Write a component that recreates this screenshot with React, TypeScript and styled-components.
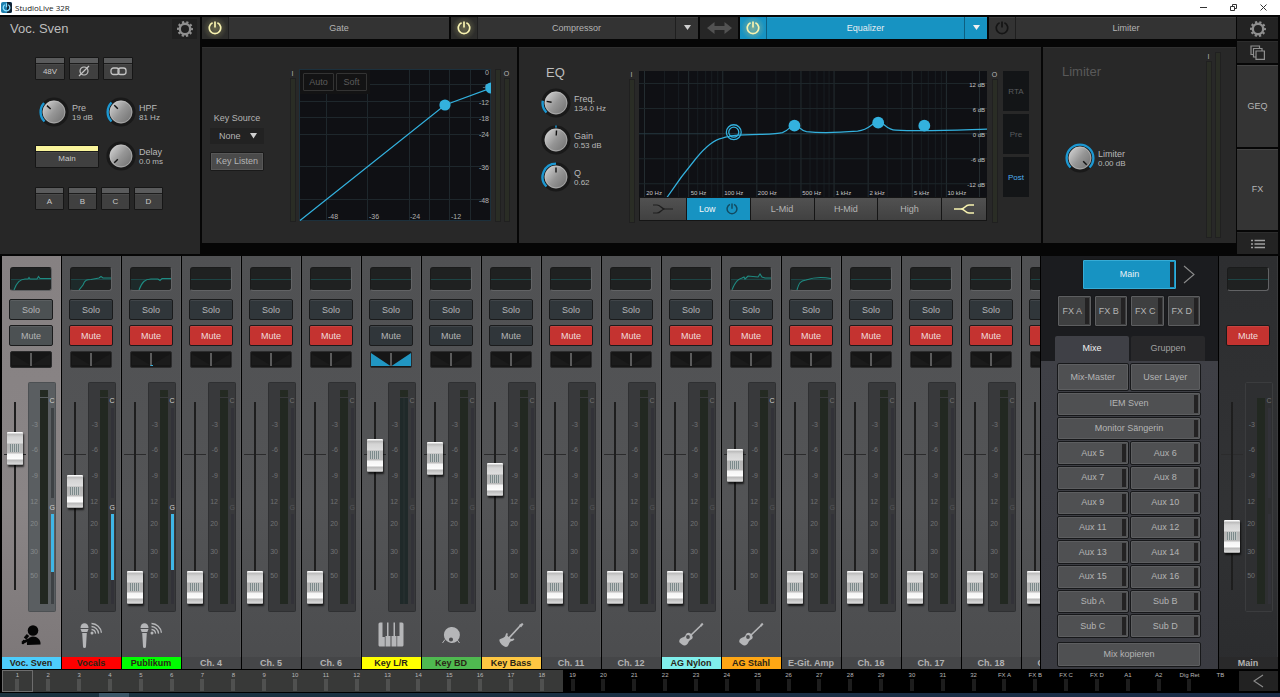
import React, { useId, useState } from 'react';
import styled, { createGlobalStyle, css } from 'styled-components';

const blue = '#1793c2';
const accent = '#33b1de';
const cream = '#f8f3b0';

const GlobalStyle = createGlobalStyle`
  *, *::before, *::after { box-sizing: border-box; }
  body {
    margin: 0;
    background: #000;
    color: #b4b4b4;
    font: 9px/11px "Liberation Sans", Arial, sans-serif;
  }
  button, input, select {
    margin: 0;
    padding: 0;
    border: 0;
    background: none;
    color: inherit;
    font: inherit;
  }
  svg { display: block; }
`;

const Page = styled.div`
  display: flex;
  flex-direction: column;
  min-height: 100vh;
`;

/* ---------- window title bar ---------- */

const TitleBar = styled.header`
  display: flex;
  align-items: center;
  height: 15px;
  padding: 0 2px 0 1px;
  background: #fff;
  color: #222;
  font: 8px/12px "Open Sans", "Noto Sans", sans-serif;
`;
const AppTitle = styled.span`
  flex: 1;
  padding-left: 3px;
`;
const WindowButton = styled.button`
  display: flex;
  align-items: center;
  justify-content: center;
  width: 30px;
  height: 15px;
`;

/* ---------- upper half ---------- */

const Upper = styled.section`
  display: flex;
  gap: 1px;
  height: 241px;
  padding: 2px 2px 2px 0;
  background: #060606;
`;
const ChannelPanel = styled.div`
  flex: none;
  width: 200px;
  margin-right: 1px;
  background: #272727;
`;
const PanelHead = styled.div`
  display: flex;
  align-items: center;
  justify-content: space-between;
  height: 24px;
  padding: 0 3px 0 10px;
`;
const Heading = styled.h2<{ $dim?: boolean }>`
  margin: 0;
  color: ${p => (p.$dim ? '#595959' : '#bdbdbd')};
  font-size: 13px;
  font-weight: 400;
  line-height: 16px;
`;
const GearButton = styled.button`
  display: flex;
  align-items: center;
  justify-content: center;
  width: 25px;
  height: 20px;
  background: #202020;
`;
const ChannelControls = styled.div`
  display: flex;
  flex-direction: column;
  padding: 16px 0 0 35px;
`;
const ButtonRow = styled.div`
  display: flex;
  gap: 4px;
`;
const KnobGrid = styled.div`
  display: grid;
  grid-template-columns: 67px 1fr;
  align-items: center;
  row-gap: 14px;
  padding: 17px 0 16px;
`;
const LampButton = styled.button<{ $w: number; $on?: boolean }>`
  display: flex;
  align-items: center;
  justify-content: center;
  width: ${p => p.$w}px;
  height: 23px;
  padding-top: 5px;
  border: 1px solid #161616;
  border-radius: 1px;
  background: linear-gradient(${p => (p.$on ? '#faf59c' : '#5a5b5c')} 0 5px, #1c1c1c 5px 6px, #494949 6px 7px, #404040 7px);
  color: #c8c8c8;
  font-size: 8px;
`;

const KnobWrap = styled.label<{ $pad?: number }>`
  display: flex;
  align-items: center;
  gap: 3px;
  padding-left: ${p => p.$pad ?? 0}px;
  color: #b9b9b9;
`;
const Dial = styled.span`
  position: relative;
  flex: none;
  width: 30px;
  height: 30px;
`;
const DialInput = styled.input`
  position: absolute;
  inset: 0;
  width: 100%;
  height: 100%;
  opacity: 0;
`;
const KnobText = styled.span`
  display: flex;
  flex-direction: column;
  line-height: 10px;
  padding-top: 2px;
`;
const KnobValue = styled.span`
  font-size: 8px;
`;

const Processors = styled.div`
  display: flex;
  flex: 1;
  flex-direction: column;
  min-width: 0;
`;
const TabBar = styled.nav`
  display: flex;
  flex: none;
  gap: 2px;
  height: 22px;
`;
const Tab = styled.div<{ $on?: boolean }>`
  display: flex;
  flex: 1;
  gap: 1px;
  background: ${p => (p.$on ? '#0d5f80' : '#1f1f1f')};
  color: ${p => (p.$on ? '#e6eef2' : '#b4b4b4')};
`;
const TabPart = styled.button<{ $w?: number; $glow?: boolean; $on?: boolean }>`
  display: flex;
  flex: ${p => (p.$w ? 'none' : '1')};
  align-items: center;
  justify-content: center;
  width: ${p => (p.$w ? `${p.$w}px` : 'auto')};
  background: ${p =>
    p.$on
      ? p.$glow
        ? `radial-gradient(circle, #7cae9c 0, ${blue} 70%)`
        : `linear-gradient(#2aa0cc 0 1px, ${blue} 1px)`
      : p.$glow
        ? 'radial-gradient(circle, #66654a 0, #2d2d2b 70%)'
        : 'linear-gradient(#414141 0 1px, #333 1px)'};
`;
const LinkButton = styled.button`
  display: flex;
  flex: none;
  align-items: center;
  justify-content: center;
  width: 38px;
  background: #262626;
`;
const Panels = styled.div`
  display: flex;
  flex: 1;
  gap: 2px;
  margin: 8px 0 11px;
`;
const panel = css`
  display: flex;
  border-top: 1px solid #303030;
  background: #282828;
`;
const CompressorPanel = styled.section`
  ${panel}
  flex: none;
  width: 315px;
  padding: 21px 7px 0 8px;
`;
const EqPanel = styled.section`
  ${panel}
  flex: 1;
  min-width: 0;
  padding: 17px 12px 0 22px;
`;
const LimiterPanel = styled.section`
  ${panel}
  flex: none;
  justify-content: space-between;
  width: 193px;
  padding: 4px 15px 0 19px;
`;
const KeyColumn = styled.div`
  display: flex;
  flex-direction: column;
  align-items: center;
  width: 54px;
  margin-right: 25px;
  padding-top: 44px;
`;
const SelectWrap = styled.div`
  position: relative;
  display: flex;
  align-items: center;
  width: 54px;
  height: 16px;
  margin: 4px 0 8px;
  background: #222;
`;
const Select = styled.select`
  width: 100%;
  padding-left: 9px;
  appearance: none;
  option { background: #222; }
`;
const SelectArrow = styled.svg`
  position: absolute;
  right: 7px;
  pointer-events: none;
`;
const KeyListen = styled.button`
  width: 54px;
  height: 19px;
  border: 1px solid #1a1a1a;
  border-radius: 1px;
  background: #4a4a4a;
  box-shadow: inset 0 0 0 1px #575757;
`;

const MeterColumn = styled.div<{ $h: number }>`
  display: flex;
  flex: none;
  flex-direction: column;
  align-items: center;
  width: 7px;
  height: ${p => p.$h}px;
  font-size: 7px;
  line-height: 9px;
`;
const MeterBar = styled.div`
  flex: 1;
  width: 6px;
  border: 1px solid #202020;
  background: #2a2d25;
`;
const GraphFrame = styled.div`
  position: relative;
  width: 192px;
  margin: 0 3px 0 3px;
`;
const GraphButtons = styled.div`
  position: absolute;
  top: 1px;
  left: 1px;
  display: flex;
  gap: 2px;
  padding: 3px;
  background: #131314;
`;
const GhostButton = styled.button`
  width: 31px;
  height: 18px;
  border: 1px solid #333;
  border-radius: 1px;
  color: #5c5c5c;
`;
const MeterPair = styled.div`
  display: flex;
  gap: 2px;
`;

const EqKnobs = styled.div`
  display: flex;
  flex-direction: column;
  gap: 7px;
  width: 87px;
`;
const EqKnobHead = styled.div`
  height: 16px;
  padding-left: 5px;
`;
const EqGraph = styled.div`
  flex: 1;
  min-width: 0;
  margin: 6px 4px 0;
`;
const EqMeter = styled.div`
  padding-top: 5px;
`;
const BandRow = styled.div`
  display: flex;
  gap: 1px;
  height: 24px;
  padding: 1px;
  background: #151515;
`;
const Band = styled.button<{ $w?: number; $on?: boolean }>`
  display: flex;
  flex: ${p => (p.$w ? 'none' : '1')};
  align-items: center;
  justify-content: center;
  gap: 10px;
  width: ${p => (p.$w ? `${p.$w}px` : 'auto')};
  background: ${p => (p.$on ? blue : 'linear-gradient(#515151, #414141)')};
  color: ${p => (p.$on ? '#f2f7f9' : '#b4b4b4')};
`;
const SourceColumn = styled.div`
  display: flex;
  flex: none;
  flex-direction: column;
  gap: 3px;
  width: 26px;
  margin: 6px 0 0 5px;
`;
const SourceButton = styled.button<{ $on?: boolean }>`
  height: 40px;
  background: #131517;
  color: ${p => (p.$on ? '#4fb0ee' : '#5a5c5e')};
  font-size: 8px;
`;
const LimiterLeft = styled.div`
  display: flex;
  flex-direction: column;
  gap: 63px;
  padding-top: 12px;
`;

const SideColumn = styled.nav`
  display: flex;
  flex: none;
  flex-direction: column;
  gap: 2px;
  width: 41px;
`;
const SideButton = styled.button<{ $tall?: boolean }>`
  display: flex;
  flex: ${p => (p.$tall ? '1' : 'none')};
  align-items: center;
  justify-content: center;
  height: 22px;
  border-top: 1px solid ${p => (p.$tall ? '#454545' : '#2c2c2c')};
  background: ${p => (p.$tall ? '#343434' : '#232323')};
`;

/* ---------- mixer ---------- */

const Mixer = styled.section`
  display: flex;
  flex: 1;
  padding-right: 2px;
`;
const Strips = styled.div`
  display: flex;
  flex: 1;
  gap: 1px;
  min-width: 0;
  padding-left: 2px;
  overflow: hidden;
`;
const Strip = styled.article<{ $tone: 'normal' | 'selected' | 'main' }>`
  display: flex;
  flex: none;
  flex-direction: column;
  align-items: center;
  width: 59px;
  padding-top: 12px;
  border-right: 1px solid rgba(255, 255, 255, 0.06);
  background: ${p =>
    ({
      normal: 'linear-gradient(#505153, #535456 60%, #4b4c4e)',
      selected: 'linear-gradient(#868182, #8a8586 60%, #7c7778)',
      main: 'linear-gradient(#2d2e30, #313234 60%, #2b2c2e)',
    })[p.$tone]};
`;
const Thumb = styled.button`
  flex: none;
  width: 42px;
  height: 24px;
  margin: -1px 0 8px;
  border: 1px solid rgba(20, 20, 20, 0.4);
  border-right-color: #626365;
  border-bottom-color: #626365;
  border-radius: 3px;
  background: #1f2121;
  overflow: hidden;
`;
const StripButton = styled.button<{ $kind: 'plain' | 'mute' | 'light' }>`
  flex: none;
  width: 44px;
  height: 21px;
  margin-bottom: 5px;
  padding-top: 2px;
  border: 1px solid #1a1b1c;
  border-radius: 2px;
  box-shadow: inset 0 1px 0 rgba(255, 255, 255, 0.08);
  background: ${p => ({ plain: '#30363a', mute: '#c43330', light: '#4c5153' })[p.$kind]};
  color: ${p => (p.$kind === 'mute' ? '#f0dcdc' : '#b3b5b6')};
`;
const PanButton = styled.button`
  flex: none;
  width: 42px;
  height: 17px;
  border: 1px solid #2c2c2d;
  border-radius: 2px;
  background: #161616;
`;
const Blank = styled.div<{ $h: number }>`
  flex: none;
  height: ${p => p.$h}px;
`;
const FaderRow = styled.div`
  display: flex;
  gap: 1px;
  width: 100%;
  height: 230px;
  margin-top: 14px;
  padding-left: 1px;
`;
const Fader = styled.input`
  flex: none;
  width: 24px;
  height: 216px;
  margin-top: 6px;
  appearance: none;
  writing-mode: vertical-lr;
  direction: rtl;
  background:
    linear-gradient(90deg, #2a2a2a, #111 50%, #2a2a2a) 11px 14px / 2px 188px no-repeat,
    linear-gradient(#2b2b2c, #2b2b2c) 1px 66px / 22px 1px no-repeat;
  &::-webkit-slider-thumb {
    appearance: none;
    width: 16px;
    height: 33px;
    border-radius: 1px;
    background:
      repeating-linear-gradient(90deg, #7c8a8b 0 1px, #c0c4c4 1px 2px) 3px 12px / 10px 8px no-repeat,
      linear-gradient(#fafafa 0 1px, #b9b9b9 2px, #d4d4d4 5px, #dedede 11px, #b4b4b4 12px, #bcbcbc 21px, #f4f4f4 22px, #fdfdfd 27px, #b8b8b8 28px, #dadada 32px, #777 33px);
    box-shadow: 1px 2px 2px rgba(0, 0, 0, 0.7);
  }
`;
const IconSlot = styled.div`
  display: flex;
  flex: 1;
  align-items: center;
  justify-content: center;
  min-height: 44px;
`;
const NamePlate = styled.div<{ $color?: string; $main?: boolean }>`
  flex: none;
  width: 59px;
  height: 12px;
  background: ${p => p.$color ?? (p.$main ? '#29292a' : '#454648')};
  color: ${p => (p.$color ? '#2a2416' : '#b2b2b2')};
  font-weight: 700;
  line-height: 13px;
  text-align: center;
  white-space: nowrap;
  overflow: hidden;
`;

/* ---------- mix selector ---------- */

const MixPanel = styled.aside`
  display: flex;
  flex: none;
  flex-direction: column;
  width: 178px;
  margin-right: 1px;
  border-left: 1px solid #000;
  background: #1b1c1f;
`;
const MixHead = styled.div`
  display: flex;
  align-items: center;
  gap: 6px;
  padding: 3px 0 5px 41px;
`;
const FxRow = styled.div`
  display: grid;
  grid-template-columns: repeat(4, 1fr);
  gap: 2px;
  padding: 0 17px 9px 16px;
`;
const Slot = styled.button<{ $h?: number; $tint?: 'blue' | 'dark'; $wide?: boolean; $bare?: boolean }>`
  display: flex;
  align-items: stretch;
  grid-column: ${p => (p.$wide ? 'span 2' : 'auto')};
  height: ${p => (p.$h ? `${p.$h}px` : 'auto')};
  min-width: 0;
  padding: 2px;
  border: 1px solid #17181a;
  border-radius: 2px;
  background: ${p => (p.$tint === 'blue' ? blue : p.$tint === 'dark' ? '#3e3f40' : '#4f5052')};
  box-shadow: inset 0 0 0 1px ${p => (p.$tint === 'blue' ? '#36acd6' : '#5d5e60')};
  color: ${p => (p.$tint === 'blue' ? '#e8f1f5' : '#b4b4b4')};
  &::after {
    content: "";
    flex: none;
    display: ${p => (p.$bare ? 'none' : 'block')};
    width: 4px;
    background: #232223;
  }
`;
const SlotText = styled.span<{ $centred?: boolean }>`
  flex: 1;
  align-self: center;
  padding-left: ${p => (p.$centred ? '4px' : '0')};
  white-space: nowrap;
`;
const MainSlot = styled(Slot)`
  width: 95px;
`;
const MixTabs = styled.div`
  display: grid;
  grid-template-columns: 1fr 1fr;
  gap: 2px;
  padding: 0 13px 0 14px;
`;
const MixTab = styled.button<{ $on?: boolean }>`
  height: 25px;
  border-radius: 2px 2px 0 0;
  background: ${p => (p.$on ? '#3f4046' : '#28282a')};
  color: ${p => (p.$on ? '#f0f0f0' : '#a0a0a0')};
`;
const MixBody = styled.div`
  display: flex;
  flex: 1;
  flex-direction: column;
  gap: 1px;
  padding: 2px 17px 2px 16px;
  background: linear-gradient(#3f4046, #3a3b41);
`;
const MixPair = styled.div`
  display: grid;
  grid-template-columns: 1fr 1fr;
  gap: 1px;
`;
const MixList = styled(MixPair)`
  flex: 1;
  grid-auto-rows: 1fr;
  margin-bottom: 3px;
`;

/* ---------- navigator ---------- */

const Navigator = styled.nav`
  display: flex;
  gap: 3px;
  height: 24px;
  padding: 1px 2px 1px;
`;
const NavTrack = styled.div`
  display: flex;
  flex: 1;
  background: linear-gradient(90deg, #383938 45.5%, #000 45.5%);
`;
const NavItem = styled.a<{ $current?: boolean; $in?: boolean; $bare?: boolean }>`
  display: flex;
  flex: 1 1 0;
  flex-direction: column;
  align-items: center;
  min-width: 0;
  border: 1px solid ${p => (p.$current ? '#6d6d6d' : 'transparent')};
  color: #b8b8b8;
  font-size: 6px;
  line-height: 8px;
  text-decoration: none;
  white-space: nowrap;
  &::after {
    content: "";
    flex: 1;
    display: ${p => (p.$bare ? 'none' : 'block')};
    width: 4px;
    background: ${p => (p.$in ? '#505150' : '#1d1d1d')};
  }
`;
const NavBack = styled.button`
  display: flex;
  align-items: center;
  justify-content: center;
  width: 39px;
  height: 20px;
  margin-top: 1px;
  background: #222;
`;
const Taskbar = styled.footer`
  flex: none;
  height: 4px;
  background: linear-gradient(90deg, transparent 99px, #3c5768 99px 129px, transparent 129px),
    linear-gradient(90deg, #1b333f, #1b2c48);
`;

/* ---------- drawings ---------- */

const Power = ({ color, size = 14 }: { color: string; size?: number }) => (
  <svg width={size} height={size} viewBox="0 0 14 14" fill="none" stroke={color} strokeWidth="1.7">
    <path d="M4.6 1.7a5.7 5.7 0 1 0 4.8 0" />
    <path d="M7 .6v6" />
  </svg>
);

const Gear = () => (
  <svg width="16" height="16" viewBox="0 0 16 16" fill="none" stroke="#8f8f8f">
    <circle cx="8" cy="8" r="5.2" strokeWidth="2.4" />
    <circle cx="8" cy="8" r="7" strokeWidth="2" strokeDasharray="2.2 2.198" strokeDashoffset="1.1" />
  </svg>
);

const Down = ({ color = '#d0d0d0' }: { color?: string }) => (
  <svg width="7" height="6" viewBox="0 0 7 6"><path d="M0 0h7L3.5 5z" fill={color} /></svg>
);

const Knob = ({ label, value, angle, from = -135, pad }: { label: string; value: string; angle: number; from?: number; pad?: number }) => {
  const id = useId();
  const at = (deg: number, r: number) => {
    const a = (deg * Math.PI) / 180;
    return [15 + r * Math.sin(a), 15 - r * Math.cos(a)];
  };
  const start = at(from, 13.4);
  const end = at(angle, 13.4);
  const p1 = at(angle, 4.5);
  const p2 = at(angle, 9.5);
  return (
    <KnobWrap $pad={pad}>
      <Dial>
        <svg width="30" height="30">
          <defs>
            <linearGradient id={id} x1="0" y1="0.1" x2="1" y2="0.9">
              <stop offset="0" stopColor="#d6d6d6" />
              <stop offset="0.5" stopColor="#969696" />
              <stop offset="1" stopColor="#707070" />
            </linearGradient>
          </defs>
          <circle cx="15" cy="15" r="14.6" fill="#191919" />
          {angle > from && (
            <path
              d={`M${start.join(' ')}A13.4 13.4 0 ${angle - from > 180 ? 1 : 0} 1 ${end.join(' ')}`}
              fill="none" stroke="#1d98d2" strokeWidth="2.4"
            />
          )}
          <circle cx="15" cy="15" r="11.4" fill={`url(#${id})`} />
          <circle cx="15" cy="15" r="10.9" fill="none" stroke="#c9c9c9" strokeOpacity="0.5" />
          <path d={`M${p1.join(' ')}L${p2.join(' ')}`} stroke="#111" strokeWidth="1.4" />
        </svg>
        <DialInput type="range" min={-135} max={135} defaultValue={angle} />
      </Dial>
      <KnobText>
        <span>{label}</span>
        <KnobValue>{value}</KnobValue>
      </KnobText>
    </KnobWrap>
  );
};

const Meter = ({ label, h }: { label?: string; h: number }) => (
  <MeterColumn $h={h}>
    {label}
    <MeterBar />
  </MeterColumn>
);

const CompressorGraph = () => (
  <svg width="192" height="152" viewBox="0 0 192 152" fontSize="7" fill="#b0b0b0">
    <rect width="192" height="152" fill="#0f1014" />
    <g stroke="#1e272c">
      {[27.5, 68.5, 110.5, 130.5, 150.5, 171.5].map(x => <path key={x} d={`M${x} 0V152`} />)}
      {[15.5, 32.5, 48.5, 65.5, 97.5, 130.5].map(y => <path key={y} d={`M0 ${y}H192`} />)}
    </g>
    <rect x="0.5" y="0.5" width="191" height="151" fill="none" stroke="#1c303c" />
    <g textAnchor="end">
      {([['0', 6], ['-6', 20], ['-12', 36], ['-18', 52], ['-24', 68], ['-36', 101], ['-48', 134]] as [string, number][]).map(([t, y]) => (
        <text key={t} x="190" y={y}>{t}</text>
      ))}
    </g>
    {([['-48', 29], ['-36', 70], ['-24', 111], ['-12', 152]] as [string, number][]).map(([t, x]) => (
      <text key={t} x={x} y="150">{t}</text>
    ))}
    <path d="M1 151.5L146 36 192 19" fill="none" stroke={accent} strokeWidth="1.2" />
    <circle cx="146" cy="36" r="5.6" fill={accent} />
    <path d="M192 13.4a5.6 5.6 0 0 0 0 11.2z" fill={accent} />
  </svg>
);

const hz = (f: number) => 83 + 111.3 * Math.log10(f / 100);
const eqLines = [10, 100, 1000, 10000]
  .flatMap(d => [1, 2, 3, 4, 5, 6, 7, 8, 9].map(n => n * d))
  .filter(f => f >= 20 && f <= 20000);
const eqLabels: [string, number][] = [
  ['20 Hz', 20], ['50 Hz', 50], ['100 Hz', 100], ['200 Hz', 200], ['500 Hz', 500],
  ['1 kHz', 1000], ['2 kHz', 2000], ['5 kHz', 5000], ['10 kHz', 10000],
];

const EqualizerGraph = () => (
  <svg width="100%" viewBox="0 0 347 126" fontSize="6" fill="#c4c4c4">
    <rect width="347" height="126" fill="#0f1014" />
    <g>
      {eqLines.map(f => (
        <path key={f} d={`M${Math.round(hz(f)) + 0.5} 0V126`} stroke={/^[125]/.test(String(f)) ? '#242d31' : '#181e22'} />
      ))}
      {[12.5, 37.5, 62.5, 87.5, 112.5].map(y => (
        <path key={y} d={`M0 ${y}H347`} stroke={y === 62.5 ? '#263940' : '#1d262a'} />
      ))}
    </g>
    <g textAnchor="end">
      {['12 dB', '6 dB', '0 dB', '-6 dB', '-12 dB'].map((t, i) => (
        <text key={t} x="345" y={16 + i * 25}>{t}</text>
      ))}
    </g>
    {eqLabels.map(([t, f]) => <text key={t} x={hz(f) + 2} y="124">{t}</text>)}
    <path
      d="M28 126Q42 105 57 87T83 67Q90 65 94 64.5C115 62.5 135 64 143 61.5C150 59 151 54 155 54S160 59 167 60.5C185 62.5 205 61 218 60C231 58.5 232 51 238.5 51S246 58.5 256 59C285 60.5 315 59 347 58"
      fill="none" stroke={accent} strokeWidth="1.2"
    />
    <g fill="none" stroke={accent} strokeWidth="1.3">
      <circle cx="94.5" cy="61" r="7.4" />
      <circle cx="94.5" cy="61" r="5" />
    </g>
    <g fill={accent}>
      <circle cx="155" cy="54.5" r="5.9" />
      <circle cx="238.5" cy="51.5" r="5.9" />
      <circle cx="284.5" cy="54.5" r="5.9" />
    </g>
  </svg>
);

const thumbCurves: Record<string, string> = {
  sven: 'M3 22C6 14 9 11.5 14 11L17 11 18 9.5 19 11H26L27.5 8.5 29 10.5H40',
  vocals: 'M8 22L12 17C14 11.5 16 11.5 20 11.5L28 10 30 8.5 32 10H40',
  publikum: 'M8 22C11 14 14 11 20 11H27L29 12.5 31 10.5H40',
  stahl: 'M1 22C5 12 8 11 11 10L13 9 14 11 17 8 27 9 29 6 31 9 34 10H40',
  egit: 'M6 22C8 15 9 13 15 12C22 9.5 32 9 40 10.5',
};

const EqThumb = ({ curve }: { curve?: string }) => (
  <svg width="40" height="22" viewBox="0 0 40 22">
    {curve && <path d={`${thumbCurves[curve]}V11.5H0V22z`} fill="#1c3334" opacity="0.5" />}
    <path d="M0 11.5H40" stroke="#1d4545" />
    {curve && <path d={thumbCurves[curve]} fill="none" stroke="#1f8b82" strokeWidth="1.1" />}
  </svg>
);

const PanView = ({ kind }: { kind?: 'stereo' | 'nudge' }) => (
  <svg width="40" height="15" viewBox="0 0 40 15">
    {kind === 'stereo'
      ? <path d="M0 1L19.5 14H0zM40 1L20.5 14H40z" fill="#2196c2" />
      : <path d="M1 2L19 13H1zM39 2L21 13H39z" fill="#1b1b1b" />}
    <path d="M20 1V14" stroke="#a0a0a0" />
    {kind === 'nudge' && <path d="M19.5 13.5h2.5" stroke={accent} />}
  </svg>
);

interface Channel {
  name: string;
  level: number;
  muted?: boolean;
  color?: string;
  curve?: string;
  icon?: React.ReactNode;
  pan?: 'stereo' | 'nudge';
  gate?: number;
  comp?: boolean;
  selected?: boolean;
}

const LevelMeter = ({ ch, main }: { ch: Channel; main?: boolean }) => (
  <svg width="28" height="230" viewBox="0 0 28 230" fontSize="7" fill={ch.selected ? '#85898b' : '#707173'}>
    <rect x="0.5" y="0.5" width="27" height="229" rx="1" fill={ch.selected ? '#5a5e61' : main ? '#2e2f31' : '#38393b'} stroke={ch.selected ? '#4c5053' : main ? '#3b3c3e' : '#2f3032'} />
    {!main && <rect x="12" y="8" width="8" height="7" fill="#242a22" />}
    <rect x="12" y="16" width="8" height="206" fill={ch.pan === 'stereo' ? '#1f2929' : '#222821'} />
    {ch.pan === 'stereo' && <path d="M16 16V222" stroke="#2a3233" />}
    <rect x="23" y="26" width="3" height="90" fill={ch.selected ? '#3d4144' : '#323238'} />
    <rect x="23" y="132" width="3" height="90" fill={ch.selected ? '#3d4144' : '#323238'} />
    {ch.gate && <rect x="23" y="132" width="3" height={ch.gate} fill="#3fb6e6" />}
    <g textAnchor="end">
      {([['-3', 45], ['-6', 70], ['-9', 96], ['12', 122], ['20', 144], ['30', 172], ['50', 196]] as [string, number][]).map(([t, y]) => (
        <text key={t} x="10" y={y}>{t}</text>
      ))}
    </g>
    <text x="21.5" y="21" fill={ch.comp ? '#cfcfcf' : undefined}>C</text>
    {!main && <text x="21.5" y="128" fill={ch.gate ? '#cfcfcf' : '#55565a'}>G</text>}
  </svg>
);

const Singer = (
  <svg width="20" height="20" viewBox="0 0 20 20">
    <circle cx="12" cy="5.5" r="5.3" fill="#050505" />
    <path d="M6 20c-.5-5 2-8.500 6-8.500s8 3 7.500 8z" fill="#050505" />
    <path d="M1.500 19L3 15" stroke="#050505" strokeWidth="2" />
    <path d="M1 18L8 14.500" stroke="#050505" strokeWidth="2.600" />
    <path d="M4 13.500L7 10" stroke="#050505" strokeWidth="3.200" />
  </svg>
);
const Mic = (
  <svg width="22" height="26" viewBox="0 0 22 26" fill="#b5b6b8">
    <path d="M.5 6a4 4.800 0 0 1 8 0z" />
    <path d="M.5 7h8l-1.200 3H1.700zM2.200 11h4.600L6 24.500a1.500 1.500 0 0 1-3 0z" />
    <circle cx="12" cy="11" r="1.500" />
    <g fill="none" stroke="#b5b6b8" strokeWidth="1.300">
      <path d="M11.500 7.500A4.500 4.500 0 0 1 15.600 11.600" />
      <path d="M11.500 4.500A7.500 7.500 0 0 1 18.600 11.600" />
      <path d="M11.500 1.500A10.500 10.500 0 0 1 21.400 10.800" />
    </g>
  </svg>
);
const Piano = (
  <svg width="26" height="25" viewBox="0 0 26 25" fill="#b5b6b8">
    <path d="M2 .5h2.500V15H6.800V24.500H2.500a1.500 1.500 0 0 1-2-1.500V2A1.500 1.500 0 0 1 2 .5z" />
    <path d="M9 .5h1.500V14h2V24.500H7.500V14H9zM15.500.5H17V14h1.500V24.500h-5V14h2z" />
    <path d="M21.500.5H24A1.500 1.500 0 0 1 25.500 2V23a1.500 1.500 0 0 1-2 1.500h-4.300V14h2.300z" />
  </svg>
);
const Kick = (
  <svg width="18" height="18" viewBox="0 0 18 18" fill="#b5b6b8">
    <path fillRule="evenodd" d="M9 1a8 8 0 1 1 0 15.900A8 8 0 0 1 9 1zm0 10.500a2 2 0 1 0 0 4.100 2 2 0 0 0 0-4.100z" />
    <path d="M3 13.500L.5 17M15 13.500L17.500 17" stroke="#b5b6b8" />
  </svg>
);
const Bass = (
  <svg width="26" height="26" viewBox="0 0 26 26" fill="#b5b6b8">
    <path d="M9 18L22.500 3.500" stroke="#b5b6b8" strokeWidth="1.700" />
    <path d="M21 3l3.200-2 1.300 1.300L23 5.500z" />
    <path d="M1.500 17.500C3 16 5.500 16.500 7 14.500c.8-1.500.5-3 2-3.500l.8.800-.4 2 3.500 3.200 2.800-.6.800.8c-.8 2-3.500 1.500-4.500 2.800-1.500 2-1.500 5-4 5s-7.500-5-6.500-7.500z" />
  </svg>
);
const Guitar = (
  <svg width="26" height="26" viewBox="0 0 26 26">
    <path d="M11 15L23.500 3" stroke="#b5b6b8" strokeWidth="1.700" />
    <path d="M22 3.200L24 .8l1.500 1.500L23.300 4.700z" fill="#b5b6b8" />
    <path d="M1.500 18c.8-2.500 5-2.500 6-4.500.5-2.500 3-3.500 5-2s3 4 1.500 5.500c-1.500 1-2.500 1-3.500 3-1.200 3.500-4 4.500-6.500 2.500S.8 20.500 1.500 18z" fill="#b5b6b8" />
    <circle cx="10" cy="15" r="1.900" fill="#4e4f51" />
  </svg>
);

/* ---------- data ---------- */

const plain = (n: number): Channel => ({ name: `Ch. ${n}`, level: 0, muted: true });

const channels: Channel[] = [
  { name: 'Voc. Sven', level: 139, color: '#4dcdfc', curve: 'sven', icon: Singer, gate: 58, comp: true, selected: true },
  { name: 'Vocals', level: 96, muted: true, color: '#fe0000', curve: 'vocals', icon: Mic, gate: 66, comp: true },
  { name: 'Publikum', level: 0, muted: true, color: '#00fe00', curve: 'publikum', icon: Mic, gate: 56, comp: true, pan: 'nudge' },
  plain(4), plain(5), plain(6),
  { name: 'Key L/R', level: 132, color: '#ffff00', icon: Piano, pan: 'stereo' },
  { name: 'Key BD', level: 129, color: '#4fb950', icon: Kick },
  { name: 'Key Bass', level: 108, color: '#fec742', icon: Bass },
  plain(11), plain(12),
  { ...plain(0), name: 'AG Nylon', color: '#80efec', icon: Guitar },
  { name: 'AG Stahl', level: 122, muted: true, color: '#fea614', icon: Guitar, curve: 'stahl', comp: true },
  { ...plain(0), name: 'E-Git. Amp', curve: 'egit' },
  plain(16), plain(17), plain(18), plain(19),
];

const sends = [
  'Aux 5', 'Aux 6', 'Aux 7', 'Aux 8', 'Aux 9', 'Aux 10', 'Aux 11', 'Aux 12',
  'Aux 13', 'Aux 14', 'Aux 15', 'Aux 16', 'Sub A', 'Sub B', 'Sub C', 'Sub D',
];

const navItems = [
  ...Array.from({ length: 32 }, (_, i) => String(i + 1)),
  'FX A', 'FX B', 'FX C', 'FX D', 'A1', 'A2', 'Dig Ret', 'TB',
];

const ChannelStrip = ({ ch, main }: { ch: Channel; main?: boolean }) => {
  const [level, setLevel] = useState(ch.level);
  const [muted, setMuted] = useState(!!ch.muted);
  const idle = ch.selected ? 'light' : 'plain';
  return (
    <Strip $tone={main ? 'main' : ch.selected ? 'selected' : 'normal'}>
      <Thumb aria-label={`${ch.name} EQ`}><EqThumb curve={ch.curve} /></Thumb>
      {main ? <Blank $h={26} /> : <StripButton $kind={idle}>Solo</StripButton>}
      <StripButton $kind={muted ? 'mute' : idle} onClick={() => setMuted(!muted)}>Mute</StripButton>
      {main ? <Blank $h={17} /> : <PanButton aria-label={`${ch.name} pan`}><PanView kind={ch.pan} /></PanButton>}
      <FaderRow>
        <Fader type="range" min={0} max={183} value={level} aria-label={`${ch.name} level`} onChange={e => setLevel(Number(e.target.value))} />
        <LevelMeter ch={ch} main={main} />
      </FaderRow>
      <IconSlot>{ch.icon}</IconSlot>
      <NamePlate $color={ch.color} $main={main}>{ch.name}</NamePlate>
    </Strip>
  );
};

export default function App() {
  return (
    <Page>
      <GlobalStyle />
      <TitleBar>
        <svg width="11" height="11" viewBox="0 0 11 11">
          <rect width="11" height="11" rx="2" fill="#1c7fae" />
          <path d="M6 0h3a2 2 0 0 1 2 2v7a2 2 0 0 1-2 2H6z" fill="#123" />
          <path d="M3.800 2.800a3.300 3.300 0 1 0 3.400 0M5.500 1.200v4" fill="none" stroke="#8ee0ff" strokeWidth="1.300" />
        </svg>
        <AppTitle>StudioLive 32R</AppTitle>
        <WindowButton aria-label="Minimize">
          <svg width="7" height="7"><path d="M0 3.500h7" stroke="#333" /></svg>
        </WindowButton>
        <WindowButton aria-label="Restore">
          <svg width="7" height="7" fill="none" stroke="#333"><path d="M.5 2.500h4v4h-4zM2.500 2V.5h4v4H5" /></svg>
        </WindowButton>
        <WindowButton aria-label="Close">
          <svg width="7" height="7"><path d="M.5.5l6 6M6.500.5l-6 6" stroke="#333" /></svg>
        </WindowButton>
      </TitleBar>

      <Upper>
        <ChannelPanel>
          <PanelHead>
            <Heading>Voc. Sven</Heading>
            <GearButton aria-label="Channel settings"><Gear /></GearButton>
          </PanelHead>
          <ChannelControls>
            <ButtonRow>
              <LampButton $w={30}>48V</LampButton>
              <LampButton $w={30} aria-label="Invert polarity">
                <svg width="12" height="12" fill="none" stroke="#c4c4c4" strokeWidth="1.200"><circle cx="6" cy="6" r="4" /><path d="M1 11L11 1" /></svg>
              </LampButton>
              <LampButton $w={30} aria-label="Stereo link">
                <svg width="17" height="9" fill="none" stroke="#c4c4c4" strokeWidth="1.300"><rect x="1" y="1" width="8" height="6.500" rx="2.500" /><rect x="8" y="1" width="8" height="6.500" rx="2.500" /></svg>
              </LampButton>
            </ButtonRow>
            <KnobGrid>
              <Knob label="Pre" value="19 dB" angle={-48} pad={4} />
              <Knob label="HPF" value="81 Hz" angle={-45} pad={4} />
              <LampButton $w={64} $on>Main</LampButton>
              <Knob label="Delay" value="0.0 ms" angle={-135} pad={4} />
            </KnobGrid>
            <ButtonRow>
              {['A', 'B', 'C', 'D'].map(b => <LampButton key={b} $w={29}>{b}</LampButton>)}
            </ButtonRow>
          </ChannelControls>
        </ChannelPanel>

        <Processors>
          <TabBar>
            <Tab>
              <TabPart $w={26} $glow aria-label="Gate on"><Power color={cream} /></TabPart>
              <TabPart>Gate</TabPart>
            </Tab>
            <Tab>
              <TabPart $w={26} $glow aria-label="Compressor on"><Power color={cream} /></TabPart>
              <TabPart>Compressor</TabPart>
              <TabPart $w={22} aria-label="Compressor models"><Down /></TabPart>
            </Tab>
            <LinkButton aria-label="Swap order">
              <svg width="25" height="12" viewBox="0 0 25 12" fill="#525252"><path d="M0 6l7.500-6v4h10V0L25 6l-7.500 6V8h-10v4z" /></svg>
            </LinkButton>
            <Tab $on>
              <TabPart $w={26} $glow $on aria-label="Equalizer on"><Power color={cream} /></TabPart>
              <TabPart $on>Equalizer</TabPart>
              <TabPart $w={22} $on aria-label="Equalizer models"><Down color="#f0f0f0" /></TabPart>
            </Tab>
            <Tab>
              <TabPart $w={26} aria-label="Limiter on"><Power color="#151515" /></TabPart>
              <TabPart>Limiter</TabPart>
            </Tab>
          </TabBar>

          <Panels>
            <CompressorPanel>
              <KeyColumn>
                <label htmlFor="key-source">Key Source</label>
                <SelectWrap>
                  <Select id="key-source"><option>None</option></Select>
                  <SelectArrow width="7" height="6"><path d="M0 0h7L3.500 5.500z" fill="#d0d0d0" /></SelectArrow>
                </SelectWrap>
                <KeyListen>Key Listen</KeyListen>
              </KeyColumn>
              <Meter label="I" h={153} />
              <GraphFrame>
                <CompressorGraph />
                <GraphButtons>
                  <GhostButton>Auto</GhostButton>
                  <GhostButton>Soft</GhostButton>
                </GraphButtons>
              </GraphFrame>
              <MeterPair>
                <Meter h={153} />
                <Meter label="O" h={153} />
              </MeterPair>
            </CompressorPanel>

            <EqPanel>
              <EqKnobs>
                <EqKnobHead><Heading>EQ</Heading></EqKnobHead>
                <Knob label="Freq." value="134.0 Hz" angle={-80} />
                <Knob label="Gain" value="0.53 dB" angle={3} from={-3} />
                <Knob label="Q" value="0.62" angle={0} />
              </EqKnobs>
              <EqMeter><Meter label="I" h={153} /></EqMeter>
              <EqGraph>
                <EqualizerGraph />
                <BandRow>
                  <Band $w={46} aria-label="Low cut">
                    <svg width="20" height="10" viewBox="0 0 20 10" fill="none" stroke="#1e1e1e" strokeWidth="1.200"><path d="M0 1h4c4 0 4 4 8 4h8M0 9h4c4 0 4-4 8-4" /></svg>
                  </Band>
                  <Band $on>Low<Power color="#124a60" size={12} /></Band>
                  <Band>L-Mid</Band>
                  <Band>H-Mid</Band>
                  <Band>High</Band>
                  <Band $w={44} aria-label="High shelf">
                    <svg width="20" height="10" viewBox="0 0 20 10" fill="none" stroke={cream} strokeWidth="1.500"><path d="M20 1h-5c-4 0-4 4-8 4H0M20 9h-5c-4 0-4-4-8-4" /></svg>
                  </Band>
                </BandRow>
              </EqGraph>
              <EqMeter><Meter label="O" h={153} /></EqMeter>
              <SourceColumn>
                <SourceButton>RTA</SourceButton>
                <SourceButton>Pre</SourceButton>
                <SourceButton $on>Post</SourceButton>
              </SourceColumn>
            </EqPanel>

            <LimiterPanel>
              <LimiterLeft>
                <Heading $dim>Limiter</Heading>
                <Knob label="Limiter" value="0.00 dB" angle={135} pad={3} />
              </LimiterLeft>
              <MeterPair>
                <Meter label="I" h={186} />
                <Meter h={186} />
              </MeterPair>
            </LimiterPanel>
          </Panels>
        </Processors>

        <SideColumn>
          <SideButton aria-label="Settings"><Gear /></SideButton>
          <SideButton aria-label="Copy">
            <svg width="15" height="15" fill="#232323" stroke="#8f8f8f" strokeWidth="1.200"><path d="M1 1h8.500v8.500H1z" /><path d="M3.500 3.500H12V12H3.500z" /><path d="M6 6h8.400v8.400H6z" /></svg>
          </SideButton>
          <SideButton $tall>GEQ</SideButton>
          <SideButton $tall>FX</SideButton>
          <SideButton aria-label="List">
            <svg width="14" height="10" stroke="#a0a0a0" strokeWidth="1.400"><path d="M0 1.500h2M3.500 1.500H14M0 5h2M3.500 5H14M0 8.500h2M3.500 8.500H14" /></svg>
          </SideButton>
        </SideColumn>
      </Upper>

      <Mixer>
        <Strips>
          {channels.map(ch => <ChannelStrip key={ch.name} ch={ch} />)}
        </Strips>

        <MixPanel>
          <MixHead>
            <MainSlot $h={31} $tint="blue"><SlotText $centred>Main</SlotText></MainSlot>
            <svg width="12" height="19" fill="none" stroke="#8c8c8c" strokeWidth="1.100"><path d="M1 1l10 8.500L1 18" /></svg>
          </MixHead>
          <FxRow>
            {['FX A', 'FX B', 'FX C', 'FX D'].map(t => <Slot key={t} $h={32} $tint="dark"><SlotText>{t}</SlotText></Slot>)}
          </FxRow>
          <MixTabs>
            <MixTab $on>Mixe</MixTab>
            <MixTab>Gruppen</MixTab>
          </MixTabs>
          <MixBody>
            <MixPair>
              <Slot $h={28} $bare><SlotText>Mix-Master</SlotText></Slot>
              <Slot $h={28} $bare><SlotText>User Layer</SlotText></Slot>
            </MixPair>
            <MixList>
              <Slot $wide><SlotText $centred>IEM Sven</SlotText></Slot>
              <Slot $wide><SlotText $centred>Monitor Sängerin</SlotText></Slot>
              {sends.map(t => <Slot key={t}><SlotText $centred>{t}</SlotText></Slot>)}
            </MixList>
            <Slot $h={25} $bare><SlotText>Mix kopieren</SlotText></Slot>
          </MixBody>
        </MixPanel>

        <ChannelStrip ch={{ name: 'Main', level: 51, muted: true }} main />
      </Mixer>

      <Navigator>
        <NavTrack>
          {navItems.map((t, i) => (
            <NavItem key={t} href={`#ch-${i + 1}`} $current={i === 0} $in={i < 18} $bare={t === 'TB'}>{t}</NavItem>
          ))}
        </NavTrack>
        <NavBack aria-label="Collapse">
          <svg width="11" height="14" fill="none" stroke="#8c8c8c" strokeWidth="1.100"><path d="M10 1L1 7l9 6" /></svg>
        </NavBack>
      </Navigator>
      <Taskbar />
    </Page>
  );
}
